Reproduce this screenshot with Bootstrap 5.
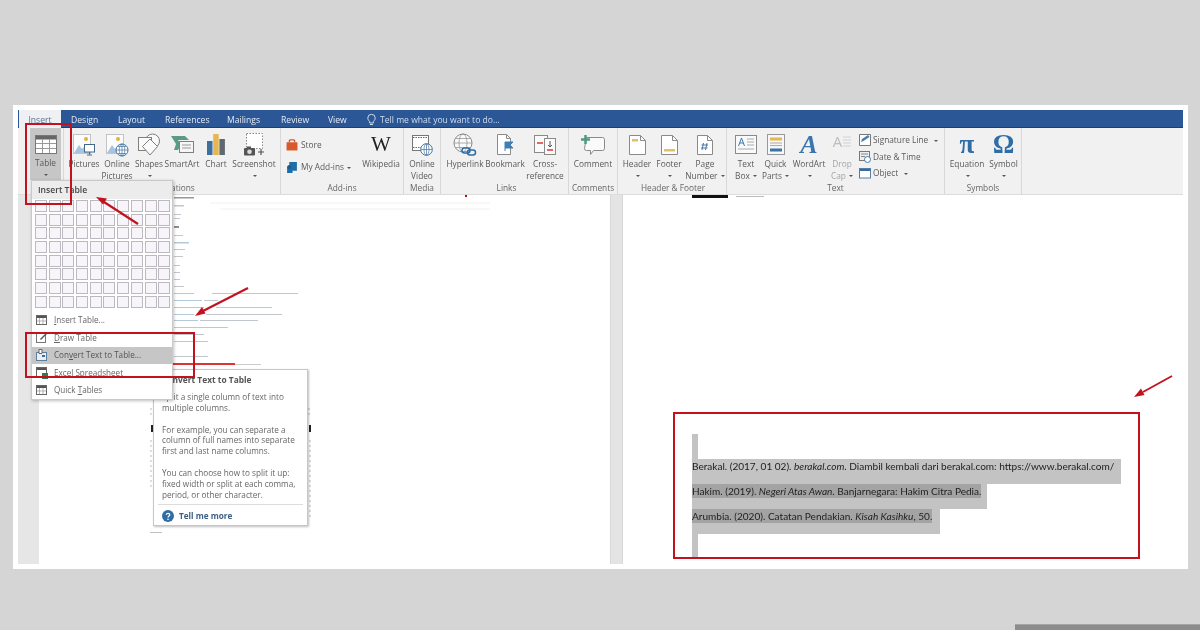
<!DOCTYPE html>
<html lang="en"><head><meta charset="utf-8"><title>Word</title>
<link href="https://cdn.jsdelivr.net/npm/bootstrap@5.3.0/dist/css/bootstrap.min.css" rel="stylesheet">
<style>
html,body{margin:0;background:#d5d5d5;overflow:hidden}
.stage{position:relative;width:1200px;height:630px;background:#d5d5d5;font-family:"Open Sans","Noto Sans",sans-serif;filter:blur(.35px);overflow:hidden}
.shot{position:absolute;left:13px;top:105px;width:1175px;height:464px;background:#fff;padding:5px}
.tabsbar{height:18px;background:#2b5797;border-bottom:1px solid #1d3f75;flex-wrap:nowrap;position:relative}
.tabsbar .nav-link{padding:0;color:#e4ebf5;font-size:8.6px;line-height:20px;position:absolute;top:0}
.tabsbar .tab-on{left:1px;width:42px;text-align:center;background:#eef0f3;color:#5d7391;height:18px}
.t1{left:53px}.t2{left:100px}.t3{left:147px}.t4{left:209px}.t5{left:263px}.t6{left:310px}
.tabsbar .t7{left:362px;color:#cfdcee}
.bulb{position:absolute;left:349px;top:3px;line-height:0}
.rib{height:67px;background:#f1f1f1;border-bottom:1px solid #dcdcdc;color:#5a5a5a}
.grp{position:relative;flex:none;height:66px;border-right:1px solid #d8d8d8;display:flex;flex-direction:column}
.btns{display:flex;height:54px}
.glbl{font-size:8.3px;line-height:12px;text-align:center;color:#666;white-space:nowrap}
.rb{flex:none;display:flex;flex-direction:column;align-items:center;text-align:center;font-size:8.3px;line-height:11.5px;padding-top:3px;white-space:nowrap}
.rb .ic{height:27px;display:flex;align-items:center;justify-content:center}
.rb.on{background:#c6c6c6;height:52px}
.rb.off{color:#a5a5a5}
.cr{display:inline-block;width:0;height:0;border-left:2px solid transparent;border-right:2px solid transparent;border-top:2.5px solid #555;vertical-align:middle;margin-left:1px}
.g46{width:46px;padding-left:12px}.g217{width:217px;padding-left:4px}.g123{width:123px;padding-left:5px}.g37{width:37px}.g128{width:128px;padding-left:4px}.g49{width:49px}.g109{width:109px;padding-left:2px}.g218{width:218px;padding-left:5px}.g77{width:77px;padding-left:3px}
.gl1{margin-left:-4px}.gl2{margin-left:-5px}.gl4{margin-left:-3px}
.w28{width:28px}.w30{width:30px}.w31{width:31px}.w32{width:32px}.w34{width:34px}.w35{width:35px}.w36{width:36px}.w38{width:38px}.w40{width:40px}.w42{width:42px}.w44{width:44px}.w49{width:48px}
.sm{flex:none;font-size:8.3px;white-space:nowrap;line-height:12px}
.addcol{width:76px;padding-top:6px}
.addcol>div{height:22px;display:flex;align-items:center;gap:3px}
.txtcol{width:86px;padding:4px 0 0 2px}
.txtcol>div{height:16.5px;display:flex;align-items:center;gap:2px}
.gly{line-height:1;display:block}
.g-w{font:400 21px/1 "Liberation Serif",serif;color:#222}
.g-a{font:italic 700 26px/1 "Liberation Serif",serif;color:#3a76ad}
.g-d{font:400 15px/1 "Open Sans",sans-serif;color:#bdbdbd;margin-right:-1px}
.g-s{font:700 27px/1 "Liberation Serif",serif;color:#2f6ea5}
.dropic{display:flex;align-items:flex-start;height:21px;gap:1px}
.docrow{height:369px}
.gut1{width:21px;background:#e6e6e6;flex:none}
.pg1{width:571px;flex:none;background:#fff}
.gut2{width:13px;background:#e4e4e4;flex:none;border-left:1px solid #d8d8d8;border-right:1px solid #d8d8d8}
.pg2{flex:1;background:#fff;padding-left:69px}
.topmark{display:block;margin-bottom:235px}
.bar{width:6px;height:25px;background:#c3c3c3}
.hl{width:fit-content;height:25px;background:#c3c3c3;font:400 10.05px/14px Lato,"Open Sans",sans-serif;color:#222}
.hl b{font-weight:400;display:inline-block}
.hl.dk b{background:#a3a3a3}
.h1p{padding-right:7px}.h2p{padding-right:6px}.h3p{padding-right:8px}
.menu.dropdown-menu{position:absolute;left:31px;top:180px;width:142px;height:220px;padding:0;margin:0;border:1px solid #c9c9c9;border-radius:0;min-width:0;font-size:8.2px;color:#666;box-shadow:1px 1px 3px rgba(0,0,0,.25);background:#fff}
.mhead{height:18px;background:#ececec;color:#444;font-weight:600;font-size:8.6px;padding-left:6px;line-height:18px}
.cells{display:grid;grid-template-columns:repeat(10,12px);gap:1.7px;padding:1px 0 0 3px;margin-bottom:4px}
.cells i{display:block;height:12px;border:1px solid #bdb9c1;background:#f8f5fa}
.menu .dropdown-item{height:17.4px;display:flex;align-items:center;gap:6px;padding:0 0 0 4px;color:#666;font-size:8.15px;line-height:1}
.menu .dropdown-item.cur{background:#c6c6c6;color:#555;width:140px}
.menu u{text-decoration-thickness:.5px}
.tip.card{position:absolute;left:153px;top:369px;width:155px;height:157px;border:1px solid #c6c6c6;border-radius:0;box-shadow:1px 1px 2px rgba(0,0,0,.25);padding:4px 8px 0;font-size:8.2px;line-height:10.9px;color:#666;background:#fff}
.tip h6{font-size:8.4px;line-height:12px;font-weight:700;margin:0 0 6px;color:#555}
.tip p{margin:0 0 10.7px;white-space:nowrap}
.more{position:absolute;left:4px;right:4px;top:134px;height:23px;border-top:1px solid #ddd;display:flex;align-items:center;gap:5px;padding-left:4px;font-weight:700;color:#3b5f85}
.rbox{position:absolute;border:2.5px solid #c3121f;background:transparent;z-index:1010}
.rb1{left:25px;top:123px;width:47px;height:82px}
.rb2{left:25px;top:332px;width:170px;height:46px}
.rb3{left:673px;top:412px;width:467px;height:147px;border-width:2px}
.over{position:absolute;left:0;top:0;pointer-events:none;z-index:1010}
.foot{position:absolute;left:1015px;top:624px;width:185px;height:6px;background:#8c8c8c;border-top:1px solid #a5a5a5}
</style></head><body>
<div class="stage">
 <div class="shot d-flex flex-column">
  <ul class="nav tabsbar">
   <li><a class="nav-link tab-on">Insert</a></li><li><a class="nav-link t1">Design</a></li><li><a class="nav-link t2">Layout</a></li><li><a class="nav-link t3">References</a></li><li><a class="nav-link t4">Mailings</a></li><li><a class="nav-link t5">Review</a></li><li><a class="nav-link t6">View</a></li>
   <li class="bulb"><svg class="d-block" width="9" height="13" viewBox="0 0 9 13" fill="none" stroke="#dfe7f2" stroke-width=".9"><path d="M2.600 8.400C1.500 7.400.8 6.400.8 5A3.700 3.700 0 0 1 8.200 5c0 1.400-.7 2.400-1.800 3.400V10H2.600z"/><path d="M3 11.500h3"/></svg></li>
   <li><a class="nav-link t7">Tell me what you want to do...</a></li>
  </ul>
  <div class="rib d-flex">
   <div class="grp g46"><div class="btns"><div class="rb w31 on"><span class="ic"><svg width="22" height="19" viewBox="0 0 22 19"><rect x=".5" y=".5" width="21" height="18" fill="#fff" stroke="#777"/><rect x="1" y="1" width="20" height="3.500" fill="#666"/><path d="M7.500 4v14M14.500 4v14M1 8.500h20M1 13.500h20" stroke="#999" fill="none"/></svg></span><span>Table</span><span><i class="cr"></i></span></div></div></div>
   <div class="grp g217"><div class="btns">
     <div class="rb w32"><span class="ic"><svg width="24" height="24" viewBox="0 0 24 24"><rect x="1.500" y="1.500" width="17" height="19" fill="#fbfbfb" stroke="#c4c4c4"/><circle cx="14" cy="6" r="2" fill="#e9ad45"/><path d="M2 20l5-8 3 4 2-2 5 6z" fill="#a9c3dc"/><rect x="12.500" y="11.500" width="10" height="7.500" fill="#fff" stroke="#44688a"/><path d="M17.500 19v2.500M15 22h5" stroke="#44688a"/></svg></span><span>Pictures</span></div>
     <div class="rb w34"><span class="ic"><svg width="24" height="24" viewBox="0 0 24 24"><rect x="1.500" y="1.500" width="17" height="19" fill="#fbfbfb" stroke="#c4c4c4"/><circle cx="13" cy="6" r="2" fill="#e9ad45"/><path d="M2 20l5-8 3 4 2-2 5 6z" fill="#a9c3dc"/><circle cx="17" cy="17" r="6" fill="#fff" stroke="#44749f"/><path d="M11 17h12M17 11v12M13 13.500h8M13 20.500h8" stroke="#44749f" stroke-width=".7" fill="none"/><ellipse cx="17" cy="17" rx="2.800" ry="6" fill="none" stroke="#44749f" stroke-width=".7"/></svg></span><span>Online<br>Pictures</span></div>
     <div class="rb w30"><span class="ic"><svg width="24" height="24" viewBox="0 0 24 24" fill="#fafafa" stroke="#7f7f7f"><circle cx="15.500" cy="8" r="7"/><rect x="1.500" y="4.500" width="13" height="13"/><path d="M13 6l7.500 7.500L13 22l-7.500-8.500z"/></svg></span><span>Shapes</span><span><i class="cr"></i></span></div>
     <div class="rb w36"><span class="ic"><svg width="24" height="20" viewBox="0 0 24 20"><path d="M1 1h14l4 4H8l3 5-3 5H4l2-6z" fill="#5b9b84"/><rect x="9.500" y="6.500" width="14" height="11" fill="#f6f6f6" stroke="#808080"/><path d="M12 10h9M12 13h9" stroke="#999"/></svg></span><span>SmartArt</span></div>
     <div class="rb w32"><span class="ic"><svg width="18" height="21" viewBox="0 0 18 21"><rect x="0" y="7" width="5.500" height="14" fill="#3e709f"/><rect x="6.200" y="0" width="5.500" height="21" fill="#e5b652"/><rect x="12.400" y="5" width="5.500" height="16" fill="#5e6973"/></svg></span><span>Chart</span></div>
     <div class="rb w44"><span class="ic"><svg width="22" height="23" viewBox="0 0 22 23"><rect x="3.500" y=".5" width="16" height="15" fill="#fff" stroke="#888" stroke-dasharray="1.500 1.500"/><rect x="1" y="15" width="11" height="7.500" rx="1" fill="#555"/><rect x="4" y="13.500" width="4" height="2" fill="#555"/><circle cx="6.500" cy="18.800" r="2.300" fill="#ddd"/><path d="M18 16v6M15 19h6" stroke="#555" stroke-width="1.200"/></svg></span><span>Screenshot</span><span><i class="cr"></i></span></div>
    </div><div class="glbl gl1">Illustrations</div></div>
   <div class="grp g123"><div class="btns">
     <div class="addcol flex-none"><div class="sm"><svg width="12" height="12" viewBox="0 0 11 11"><path d="M.5 3h10v7.500H.5z" fill="#d9582c"/><path d="M3 3V1.500C3 .5 8 .5 8 1.500V3" fill="none" stroke="#c9471f"/></svg><span>Store</span></div><div class="sm"><svg width="12" height="12" viewBox="0 0 11 11"><path d="M3 1h7v8H6v2H1V5h2z" fill="#1f6da6"/><circle cx="3" cy="5.500" r="1.800" fill="#1a5c8e"/></svg><span>My Add-ins <i class="cr"></i></span></div></div>
     <div class="rb w38"><span class="ic"><span class="gly g-w">W</span></span><span>Wikipedia</span></div>
    </div><div class="glbl gl2">Add-ins</div></div>
   <div class="grp g37"><div class="btns"><div class="rb w36"><span class="ic"><svg width="22" height="22" viewBox="0 0 22 22"><rect x="1.500" y="1.500" width="16" height="15" fill="#fff" stroke="#777"/><path d="M2 3.500h15M2 13.500h9" stroke="#666" stroke-dasharray="1.500 1"/><circle cx="15.500" cy="15.500" r="5.800" fill="#fff" stroke="#44749f"/><path d="M10 15.500h11M15.500 10v11" stroke="#44749f" stroke-width=".7"/><ellipse cx="15.500" cy="15.500" rx="2.500" ry="5.800" fill="none" stroke="#44749f" stroke-width=".7"/></svg></span><span>Online<br>Video</span></div></div><div class="glbl">Media</div></div>
   <div class="grp g128"><div class="btns">
     <div class="rb w40"><span class="ic"><svg width="24" height="24" viewBox="0 0 24 24" fill="none"><circle cx="10" cy="10" r="9" stroke="#8a8a8a" fill="#fafafa"/><ellipse cx="10" cy="10" rx="4" ry="9" stroke="#8a8a8a" stroke-width=".7"/><path d="M1 10h18M2.500 5.500h15M2.500 14.500h15" stroke="#8a8a8a" stroke-width=".7"/><rect x="9" y="15" width="8" height="5" rx="2.500" stroke="#2f6ea5" stroke-width="1.500"/><rect x="14.500" y="17" width="8" height="5" rx="2.500" stroke="#2f6ea5" stroke-width="1.500"/></svg></span><span>Hyperlink</span></div>
     <div class="rb w40"><span class="ic"><svg width="18" height="21" viewBox="0 0 18 21"><path d="M1.500.5h9l4 4v16h-13z" fill="#fff" stroke="#8a8a8a"/><path d="M10.500.5v4h4" fill="none" stroke="#8a8a8a"/><path d="M9 8v9M9 8h8l-3 3 3 3H9" fill="#3f7fb5" stroke="#3f7fb5"/></svg></span><span>Bookmark</span></div>
     <div class="rb w40"><span class="ic"><svg width="22" height="20" viewBox="0 0 22 20"><rect x=".5" y=".5" width="13" height="17" fill="#fafafa" stroke="#8a8a8a"/><rect x="10.500" y="3.500" width="11" height="16" fill="#fafafa" stroke="#8a8a8a"/><path d="M3 8h6M13 15h6" stroke="#d33d2f" stroke-width="1.500"/><path d="M16 6v6l-2-2M16 12l2-2" stroke="#555" fill="none"/></svg></span><span>Cross-<br>reference</span></div>
    </div><div class="glbl">Links</div></div>
   <div class="grp g49"><div class="btns"><div class="rb w49"><span class="ic"><svg width="24" height="20" viewBox="0 0 24 20"><path d="M5.500 2.500h16a2 2 0 0 1 2 2v9a2 2 0 0 1-2 2h-9l-3 4v-4h-4a2 2 0 0 1-2-2z" fill="#fafafa" stroke="#8a8a8a"/><path d="M4.500 0v9M0 4.500h9" stroke="#4f9a80" stroke-width="2.500"/></svg></span><span>Comment</span></div></div><div class="glbl">Comments</div></div>
   <div class="grp g109"><div class="btns">
     <div class="rb w34"><span class="ic"><svg width="17" height="20" viewBox="0 0 17 20"><path d="M.5.500h11l5 5v14H.5z" fill="#fff" stroke="#8a8a8a"/><path d="M11.500.5v5h5" fill="none" stroke="#8a8a8a"/><rect x="3" y="4" width="6" height="2.500" fill="#e5bf62"/></svg></span><span>Header</span><span><i class="cr"></i></span></div>
     <div class="rb w30"><span class="ic"><svg width="17" height="20" viewBox="0 0 17 20"><path d="M.5.500h11l5 5v14H.5z" fill="#fff" stroke="#8a8a8a"/><path d="M11.500.5v5h5" fill="none" stroke="#8a8a8a"/><rect x="3" y="14" width="11" height="2.500" fill="#e5bf62"/></svg></span><span>Footer</span><span><i class="cr"></i></span></div>
     <div class="rb w42"><span class="ic"><svg width="16" height="20" viewBox="0 0 16 20"><path d="M.5.500h10l5 5v14H.5z" fill="#fff" stroke="#8a8a8a"/><path d="M10.500.5v5h5" fill="none" stroke="#8a8a8a"/><path d="M6.500 8l-1.500 7M10 8l-1.500 7M4.500 10h6.500M4 13h6.500" stroke="#4a79a6" fill="none"/></svg></span><span>Page<br>Number <i class="cr"></i></span></div>
    </div><div class="glbl">Header &amp; Footer</div></div>
   <div class="grp g218"><div class="btns">
     <div class="rb w28"><span class="ic"><svg width="22" height="19" viewBox="0 0 22 19"><rect x=".5" y=".5" width="21" height="18" fill="#fafafa" stroke="#8a8a8a"/><path d="M3.500 11l3-8 3 8M4.700 8h3.600" stroke="#3b78ad" fill="none"/><path d="M12 4h7M12 7h7M12 10h7M3 14h16" stroke="#aaa"/></svg></span><span>Text<br>Box <i class="cr"></i></span></div>
     <div class="rb w31"><span class="ic"><svg width="18" height="21" viewBox="0 0 18 21"><rect x=".5" y=".5" width="17" height="20" fill="#f7f7f7" stroke="#999"/><rect x="3" y="3.500" width="12" height="3" fill="#e5b652"/><path d="M3 9h12M3 11.500h12" stroke="#aaa"/><rect x="3" y="14.500" width="12" height="3" fill="#3a73a8"/></svg></span><span>Quick<br>Parts <i class="cr"></i></span></div>
     <div class="rb w36"><span class="ic"><span class="gly g-a">A</span></span><span>WordArt</span><span><i class="cr"></i></span></div>
     <div class="rb w30 off"><span class="ic"><span class="dropic"><span class="gly g-d">A</span><svg width="9" height="21" viewBox="0 0 9 21"><path d="M1 3h8M1 6h8M1 9h8M1 12h8" stroke="#d2d2d2"/></svg></span></span><span>Drop<br>Cap <i class="cr"></i></span></div>
     <div class="txtcol flex-none">
       <div class="sm"><svg width="12" height="12" viewBox="0 0 12 12"><path d="M.5.500h11v11H.5z" fill="#fff" stroke="#777"/><path d="M2 8l1-3 6-4 1.500 2-6 4z" fill="#4c7fae"/></svg><span>Signature Line &nbsp;<i class="cr"></i></span></div>
       <div class="sm"><svg width="12" height="12" viewBox="0 0 12 12"><rect x=".5" y=".5" width="10" height="9" fill="#eee" stroke="#777"/><path d="M2 3h7M2 5.500h4" stroke="#888"/><circle cx="8.500" cy="8.500" r="3" fill="#fff" stroke="#3e7bb0"/></svg><span>Date &amp; Time</span></div>
       <div class="sm"><svg width="12" height="12" viewBox="0 0 12 12"><rect x=".5" y="1.500" width="11" height="9.500" fill="#fff" stroke="#5a7ea2"/><rect x="1" y="2" width="10" height="2" fill="#2f6ea5"/></svg><span>Object &nbsp;<i class="cr"></i></span></div>
     </div>
    </div><div class="glbl gl2">Text</div></div>
   <div class="grp g77"><div class="btns">
     <div class="rb w38"><span class="ic"><span class="gly g-s">π</span></span><span>Equation</span><span><i class="cr"></i></span></div>
     <div class="rb w35"><span class="ic"><span class="gly g-s">Ω</span></span><span>Symbol</span><span><i class="cr"></i></span></div>
    </div><div class="glbl gl4">Symbols</div></div>
  </div>
  <div class="docrow d-flex">
   <div class="gut1"></div>
   <div class="pg1"><svg width="571" height="369" viewBox="39 195 571 369" class="d-block">
     <g fill="#9aa3ad" opacity=".6"><rect x="174" y="197" width="20" height="1.500" fill="#555"/><rect x="174" y="205" width="10" height="1.500"/><rect x="174" y="214" width="7" height="1"/><rect x="174" y="218" width="6" height="1"/><rect x="174" y="226" width="5" height="2" fill="#444"/><rect x="174" y="235" width="9" height="1"/><rect x="174" y="242" width="15" height="1.500" fill="#7fa7c4"/><rect x="174" y="249" width="11" height="1" fill="#7fa7c4"/><rect x="174" y="256" width="9" height="1"/><rect x="174" y="265" width="6" height="1"/><rect x="174" y="272" width="6" height="1"/><rect x="174" y="279" width="6" height="1"/><rect x="174" y="286" width="10" height="1"/><rect x="174" y="293" width="20" height="1" fill="#7fa7c4"/><rect x="212" y="293" width="86" height="1"/><rect x="174" y="300" width="28" height="1" fill="#7fa7c4"/><rect x="204" y="300" width="14" height="1"/><rect x="174" y="307" width="30" height="1" fill="#7fa7c4"/><rect x="216" y="307" width="56" height="1"/><rect x="174" y="314" width="20" height="1" fill="#7fa7c4"/><rect x="206" y="314" width="76" height="1"/><rect x="174" y="320" width="24" height="1" fill="#7fa7c4"/><rect x="200" y="320" width="58" height="1"/><rect x="174" y="327" width="54" height="1"/><rect x="174" y="334" width="30" height="1"/><rect x="174" y="341" width="34" height="1"/><rect x="174" y="356" width="34" height="1"/><rect x="150" y="532" width="12" height="1" fill="#999"/></g>
     <path d="M210 203h280M220 209h270" stroke="#f1f1f1"/>
     <rect x="465" y="195" width="2" height="2" fill="#a11"/>
     <rect x="173" y="363" width="62" height="2" fill="#d33"/><rect x="235" y="364" width="26" height="1" fill="#ccc"/>
     <path d="M151 425h2v7h-2zM309 425h2v7h-2z" fill="#222"/>
     <path d="M151 408v10M151 440v50M309 408v10M310 440v80" stroke="#bbb" stroke-dasharray="2 3"/>
   </svg></div>
   <div class="gut2"></div>
   <div class="pg2">
     <svg class="topmark" width="80" height="4" viewBox="0 0 80 4"><rect width="36" height="3" fill="#111"/><rect x="44" y="1" width="28" height="1" fill="#bbb"/></svg>
     <div class="bar"></div>
     <div class="hl h1p"><b>Berakal. (2017, 01 02). <em>berakal.com</em>. Diambil kembali dari berakal.com: https://www.berakal.com/</b></div>
     <div class="hl dk h2p"><b>Hakim. (2019). <em>Negeri Atas Awan.</em> Banjarnegara: Hakim Citra Pedia.</b></div>
     <div class="hl dk h3p"><b>Arumbia. (2020). Catatan Pendakian. <em>Kisah Kasihku</em>, 50.</b></div>
     <div class="bar"></div>
   </div>
  </div>
 </div>

 <div class="menu dropdown-menu show">
  <div class="mhead">Insert Table</div>
  <div class="cells"><i></i><i></i><i></i><i></i><i></i><i></i><i></i><i></i><i></i><i></i><i></i><i></i><i></i><i></i><i></i><i></i><i></i><i></i><i></i><i></i><i></i><i></i><i></i><i></i><i></i><i></i><i></i><i></i><i></i><i></i><i></i><i></i><i></i><i></i><i></i><i></i><i></i><i></i><i></i><i></i><i></i><i></i><i></i><i></i><i></i><i></i><i></i><i></i><i></i><i></i><i></i><i></i><i></i><i></i><i></i><i></i><i></i><i></i><i></i><i></i><i></i><i></i><i></i><i></i><i></i><i></i><i></i><i></i><i></i><i></i><i></i><i></i><i></i><i></i><i></i><i></i><i></i><i></i><i></i><i></i></div>
  <a class="dropdown-item"><svg width="12" height="11" viewBox="0 0 12 11"><rect x=".5" y=".5" width="10" height="9" fill="#fff" stroke="#666"/><rect x="1" y="1" width="9" height="2" fill="#555"/><path d="M3.500 3v6M7 3v6M1 6h9" stroke="#999" stroke-width=".7"/></svg><span><u>I</u>nsert Table...</span></a>
  <a class="dropdown-item"><svg width="12" height="11" viewBox="0 0 12 11"><rect x=".5" y="1.500" width="9" height="9" fill="#fff" stroke="#777"/><path d="M4 7l6-6 1 1-6 6z" fill="#555"/></svg><span><u>D</u>raw Table</span></a>
  <a class="dropdown-item cur"><svg width="12" height="12" viewBox="0 0 12 12"><rect x=".5" y="3.500" width="10" height="8" fill="#eee" stroke="#5e7f9f"/><path d="M3 .5h3v4H3z" fill="#fff" stroke="#666"/><path d="M6 7h3" stroke="#36729f" stroke-width="2"/></svg><span>Con<u>v</u>ert Text to Table...</span></a>
  <a class="dropdown-item"><svg width="12" height="12" viewBox="0 0 12 12"><rect x=".5" y=".5" width="10" height="9" fill="#fff" stroke="#666"/><rect x="1" y="1" width="9" height="2" fill="#555"/><rect x="6" y="6" width="6" height="6" fill="#2f7d4f"/></svg><span>E<u>x</u>cel Spreadsheet</span></a>
  <a class="dropdown-item"><svg width="12" height="11" viewBox="0 0 12 11"><rect x=".5" y=".5" width="10" height="9" fill="#fff" stroke="#666"/><rect x="1" y="1" width="9" height="2" fill="#555"/><path d="M3.500 3v6M7 3v6M1 6h9" stroke="#999" stroke-width=".7"/></svg><span>Quick <u>T</u>ables</span></a>
 </div>

 <div class="tip card">
  <h6>Convert Text to Table</h6>
  <p>Split a single column of text into<br>multiple columns.</p>
  <p>For example, you can separate a<br>column of full names into separate<br>first and last name columns.</p>
  <p>You can choose how to split it up:<br>fixed width or split at each comma,<br>period, or other character.</p>
  <div class="more"><svg width="12" height="12" viewBox="0 0 12 12"><circle cx="6" cy="6" r="6" fill="#2f6ea5"/><path d="M4.300 4.700C4.300 2.800 7.800 2.800 7.800 4.700 7.800 6 6 6 6 7.400" fill="none" stroke="#fff" stroke-width="1.200"/><circle cx="6" cy="9.300" r=".8" fill="#fff"/></svg><span>Tell me more</span></div>
 </div>

 <div class="rbox rb1"></div><div class="rbox rb2"></div><div class="rbox rb3"></div>
 <svg class="over" width="1200" height="630" viewBox="0 0 1200 630" fill="#c3121f" stroke="#c3121f">
  <path d="M138 224L104 202" stroke-width="2.200" fill="none"/><path d="M96 197l11 1.500-4 6z" stroke="none"/>
  <path d="M248 288L203 311" stroke-width="2.200" fill="none"/><path d="M195 316l7-9 3.500 6.500z" stroke="none"/>
  <path d="M1172 376L1143 392" stroke-width="1.800" fill="none"/><path d="M1134 397l7-8.500 3.500 6.500z" stroke="none"/>
 </svg>
 <div class="foot"></div>
</div>
<script src="https://cdn.jsdelivr.net/npm/bootstrap@5.3.0/dist/js/bootstrap.bundle.min.js"></script>
</body></html>
